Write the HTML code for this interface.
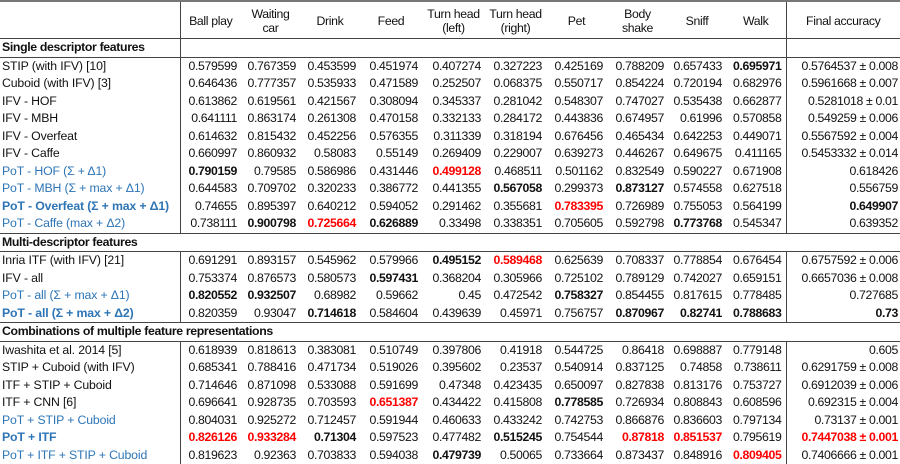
<!DOCTYPE html>
<html><head><meta charset="utf-8">
<style>
html,body{margin:0;padding:0;background:#fff;}
body{width:900px;height:459px;overflow:hidden;font-family:"Liberation Sans",Arial,sans-serif;font-size:12.3px;color:#111;}
table{border-collapse:collapse;table-layout:fixed;width:900px;border-top:2px solid #777;}
td{padding:0;white-space:nowrap;height:17.5px;line-height:17.5px;text-align:right;padding-right:4px;letter-spacing:-0.35px;overflow:visible;}
td.l{text-align:left;padding-left:2px;padding-right:0;letter-spacing:-0.15px;}
td.f{padding-right:2px;border-left:1px solid #444;}
td.v{border-left:1px solid #444;}
tr.h td{height:35px;line-height:14px;text-align:center;padding:0;padding-top:1px;border-bottom:1px solid #444;}
tr.s td{font-weight:bold;text-align:left;padding-left:2px;border-top:1px solid #444;border-bottom:1px solid #444;}
.b{font-weight:bold;}
.r{color:#ff0000;font-weight:bold;}
.bl{color:#2e75b6;}
</style></head><body>
<table>
<colgroup><col style="width:180px"><col style="width:61px"><col style="width:59px"><col style="width:60px"><col style="width:62px"><col style="width:63px"><col style="width:61px"><col style="width:61px"><col style="width:61px"><col style="width:58px"><col style="width:60px"><col style="width:114px"></colgroup>
<tr class="h"><td></td><td class="v">Ball play</td><td>Waiting<br>car</td><td>Drink</td><td>Feed</td><td>Turn head<br>(left)</td><td>Turn head<br>(right)</td><td>Pet</td><td>Body<br>shake</td><td>Sniff</td><td>Walk</td><td class="f" style="text-align:center">Final accuracy</td></tr>
<tr class="s"><td>Single descriptor features</td><td class="v" colspan="10"></td><td class="f"></td></tr>
<tr><td class="l">STIP (with IFV) [10]</td><td class="v">0.579599</td><td>0.767359</td><td>0.453599</td><td>0.451974</td><td>0.407274</td><td>0.327223</td><td>0.425169</td><td>0.788209</td><td>0.657433</td><td class="b">0.695971</td><td class="f">0.5764537 ± 0.008</td></tr>
<tr><td class="l">Cuboid (with IFV) [3]</td><td class="v">0.646436</td><td>0.777357</td><td>0.535933</td><td>0.471589</td><td>0.252507</td><td>0.068375</td><td>0.550717</td><td>0.854224</td><td>0.720194</td><td>0.682976</td><td class="f">0.5961668 ± 0.007</td></tr>
<tr><td class="l">IFV - HOF</td><td class="v">0.613862</td><td>0.619561</td><td>0.421567</td><td>0.308094</td><td>0.345337</td><td>0.281042</td><td>0.548307</td><td>0.747027</td><td>0.535438</td><td>0.662877</td><td class="f">0.5281018 ± 0.01</td></tr>
<tr><td class="l">IFV - MBH</td><td class="v">0.641111</td><td>0.863174</td><td>0.261308</td><td>0.470158</td><td>0.332133</td><td>0.284172</td><td>0.443836</td><td>0.674957</td><td>0.61996</td><td>0.570858</td><td class="f">0.549259 ± 0.006</td></tr>
<tr><td class="l">IFV - Overfeat</td><td class="v">0.614632</td><td>0.815432</td><td>0.452256</td><td>0.576355</td><td>0.311339</td><td>0.318194</td><td>0.676456</td><td>0.465434</td><td>0.642253</td><td>0.449071</td><td class="f">0.5567592 ± 0.004</td></tr>
<tr><td class="l">IFV - Caffe</td><td class="v">0.660997</td><td>0.860932</td><td>0.58083</td><td>0.55149</td><td>0.269409</td><td>0.229007</td><td>0.639273</td><td>0.446267</td><td>0.649675</td><td>0.411165</td><td class="f">0.5453332 ± 0.014</td></tr>
<tr><td class="l bl">PoT - HOF (Σ + Δ1)</td><td class="v b">0.790159</td><td>0.79585</td><td>0.586986</td><td>0.431446</td><td class="r">0.499128</td><td>0.468511</td><td>0.501162</td><td>0.832549</td><td>0.590227</td><td>0.671908</td><td class="f">0.618426</td></tr>
<tr><td class="l bl">PoT - MBH (Σ + max + Δ1)</td><td class="v">0.644583</td><td>0.709702</td><td>0.320233</td><td>0.386772</td><td>0.441355</td><td class="b">0.567058</td><td>0.299373</td><td class="b">0.873127</td><td>0.574558</td><td>0.627518</td><td class="f">0.556759</td></tr>
<tr><td class="l bl b">PoT - Overfeat (Σ + max + Δ1)</td><td class="v">0.74655</td><td>0.895397</td><td>0.640212</td><td>0.594052</td><td>0.291462</td><td>0.355681</td><td class="r">0.783395</td><td>0.726989</td><td>0.755053</td><td>0.564199</td><td class="f b">0.649907</td></tr>
<tr><td class="l bl">PoT - Caffe (max + Δ2)</td><td class="v">0.738111</td><td class="b">0.900798</td><td class="r">0.725664</td><td class="b">0.626889</td><td>0.33498</td><td>0.338351</td><td>0.705605</td><td>0.592798</td><td class="b">0.773768</td><td>0.545347</td><td class="f">0.639352</td></tr>
<tr class="s"><td colspan="12">Multi-descriptor features</td></tr>
<tr><td class="l">Inria ITF (with IFV) [21]</td><td class="v">0.691291</td><td>0.893157</td><td>0.545962</td><td>0.579966</td><td class="b">0.495152</td><td class="r">0.589468</td><td>0.625639</td><td>0.708337</td><td>0.778854</td><td>0.676454</td><td class="f">0.6757592 ± 0.006</td></tr>
<tr><td class="l">IFV - all</td><td class="v">0.753374</td><td>0.876573</td><td>0.580573</td><td class="b">0.597431</td><td>0.368204</td><td>0.305966</td><td>0.725102</td><td>0.789129</td><td>0.742027</td><td>0.659151</td><td class="f">0.6657036 ± 0.008</td></tr>
<tr><td class="l bl">PoT - all (Σ + max + Δ1)</td><td class="v b">0.820552</td><td class="b">0.932507</td><td>0.68982</td><td>0.59662</td><td>0.45</td><td>0.472542</td><td class="b">0.758327</td><td>0.854455</td><td>0.817615</td><td>0.778485</td><td class="f">0.727685</td></tr>
<tr><td class="l bl b">PoT - all (Σ + max + Δ2)</td><td class="v">0.820359</td><td>0.93047</td><td class="b">0.714618</td><td>0.584604</td><td>0.439639</td><td>0.45971</td><td>0.756757</td><td class="b">0.870967</td><td class="b">0.82741</td><td class="b">0.788683</td><td class="f b">0.73</td></tr>
<tr class="s"><td colspan="12">Combinations of multiple feature representations</td></tr>
<tr><td class="l">Iwashita et al. 2014 [5]</td><td class="v">0.618939</td><td>0.818613</td><td>0.383081</td><td>0.510749</td><td>0.397806</td><td>0.41918</td><td>0.544725</td><td>0.86418</td><td>0.698887</td><td>0.779148</td><td class="f">0.605</td></tr>
<tr><td class="l">STIP + Cuboid (with IFV)</td><td class="v">0.685341</td><td>0.788416</td><td>0.471734</td><td>0.519026</td><td>0.395602</td><td>0.23537</td><td>0.540914</td><td>0.837125</td><td>0.74858</td><td>0.738611</td><td class="f">0.6291759 ± 0.008</td></tr>
<tr><td class="l">ITF + STIP + Cuboid</td><td class="v">0.714646</td><td>0.871098</td><td>0.533088</td><td>0.591699</td><td>0.47348</td><td>0.423435</td><td>0.650097</td><td>0.827838</td><td>0.813176</td><td>0.753727</td><td class="f">0.6912039 ± 0.006</td></tr>
<tr><td class="l">ITF + CNN [6]</td><td class="v">0.696641</td><td>0.928735</td><td>0.703593</td><td class="r">0.651387</td><td>0.434422</td><td>0.415808</td><td class="b">0.778585</td><td>0.726934</td><td>0.808843</td><td>0.608596</td><td class="f">0.692315 ± 0.004</td></tr>
<tr><td class="l bl">PoT + STIP + Cuboid</td><td class="v">0.804031</td><td>0.925272</td><td>0.712457</td><td>0.591944</td><td>0.460633</td><td>0.433242</td><td>0.742753</td><td>0.866876</td><td>0.836603</td><td>0.797134</td><td class="f">0.73137 ± 0.001</td></tr>
<tr><td class="l bl b">PoT + ITF</td><td class="v r">0.826126</td><td class="r">0.933284</td><td class="b">0.71304</td><td>0.597523</td><td>0.477482</td><td class="b">0.515245</td><td>0.754544</td><td class="r">0.87818</td><td class="r">0.851537</td><td>0.795619</td><td class="f r">0.7447038 ± 0.001</td></tr>
<tr><td class="l bl">PoT + ITF + STIP + Cuboid</td><td class="v">0.819623</td><td>0.92363</td><td>0.703833</td><td>0.594038</td><td class="b">0.479739</td><td>0.50065</td><td>0.733664</td><td>0.873437</td><td>0.848916</td><td class="r">0.809405</td><td class="f">0.7406666 ± 0.001</td></tr>
</table>
</body></html>
